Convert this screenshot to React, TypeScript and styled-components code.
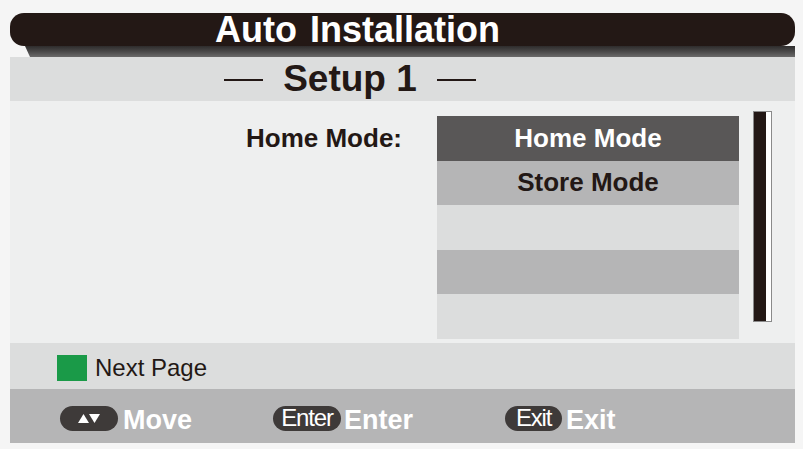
import React from 'react';
import styled, { createGlobalStyle } from 'styled-components';

const GlobalStyle = createGlobalStyle`
  html, body {
    margin: 0;
    padding: 0;
    background: #f5f5f5;
  }
  * {
    box-sizing: border-box;
  }
`;

const Screen = styled.div`
  width: 803px;
  height: 449px;
  padding: 13px 8px 6px 10px;
  display: flex;
  flex-direction: column;
  font-family: 'Liberation Sans', Arial, sans-serif;
  color: #231815;
`;

const TitleBar = styled.div`
  height: 33px;
  background: #231815;
  border-radius: 14px;
  color: #ffffff;
  font-size: 36px;
  font-weight: 700;
  line-height: 33px;
  text-align: center;
  padding-right: 90px;
  white-space: nowrap;
  word-spacing: 3px;
`;

const TitleShadow = styled.div`
  height: 11px;
  margin-left: 15px;
  background: linear-gradient(to bottom, #2e2c2c 0%, #4a4949 50%, #6b6a6a 100%);
  clip-path: polygon(0 0, 100% 0, 100% 100%, 5px 100%);
`;

const SubBand = styled.div`
  height: 44px;
  background: #dcdddd;
  display: flex;
  align-items: center;
  justify-content: center;
  gap: 20px;
  padding-right: 105px;
  font-size: 37px;
  font-weight: 700;
`;

const Dash = styled.span`
  width: 39px;
  height: 2px;
  background: #231815;
  margin-top: 2px;
`;

const Body = styled.div`
  height: 242px;
  background: #eeefef;
  display: flex;
  align-items: flex-start;
  padding-top: 10px;
`;

const Label = styled.div`
  width: 392px;
  margin-top: 5px;
  text-align: right;
  font-size: 26px;
  font-weight: 700;
  line-height: 44px;
  white-space: nowrap;
`;

const List = styled.div`
  width: 302px;
  height: 223px;
  margin: 5px 0 0 35px;
  display: flex;
  flex-direction: column;
`;

const Row = styled.div<{ $tone: 'active' | 'mid' | 'light' }>`
  flex: 1;
  display: flex;
  align-items: center;
  justify-content: center;
  font-size: 26px;
  font-weight: 700;
  background: ${p => (p.$tone === 'active' ? '#595757' : p.$tone === 'mid' ? '#b5b5b6' : '#dcdddd')};
  color: ${p => (p.$tone === 'active' ? '#ffffff' : '#231815')};
`;

const ScrollTrack = styled.div`
  width: 19px;
  height: 211px;
  margin-left: 14px;
  border: 1px solid #8a8a8a;
  background: #ffffff;
  padding-right: 5px;
`;

const ScrollThumb = styled.div`
  height: 100%;
  background: #231815;
`;

const HintBand = styled.div`
  height: 46px;
  background: #dcdddd;
  display: flex;
  align-items: center;
  padding: 4px 0 0 47px;
  gap: 8px;
  font-size: 24px;
`;

const GreenKey = styled.span`
  width: 30px;
  height: 26px;
  background: #1a9a48;
`;

const Footer = styled.div`
  height: 54px;
  background: #b5b5b6;
  display: grid;
  grid-template-columns: 213px 232px auto;
  align-items: center;
  padding: 4px 0 0 50px;
`;

const KeyItem = styled.div`
  display: flex;
  align-items: center;
`;

const Pill = styled.span<{ $w: number }>`
  width: ${p => p.$w}px;
  height: 25px;
  border-radius: 13px;
  background: #3e3a39;
  color: #ffffff;
  display: flex;
  align-items: center;
  justify-content: center;
  font-size: 24px;
  letter-spacing: -1.2px;
  line-height: 1;
  overflow: hidden;
`;

const KeyText = styled.span<{ $gap: number }>`
  margin-left: ${p => p.$gap}px;
  color: #ffffff;
  font-size: 27px;
  font-weight: 700;
  margin-top: 4px;
`;

const ArrowsIcon = () => (
  <svg width="22" height="10" viewBox="0 0 22 10">
    <polygon points="0,10 5.5,1 11,10" fill="#fff" />
    <polygon points="11,1 22,1 16.5,10" fill="#fff" />
  </svg>
);

export default function App() {
  return (
    <>
      <GlobalStyle />
      <Screen>
        <TitleBar>Auto Installation</TitleBar>
        <TitleShadow />
        <SubBand>
          <Dash />
          <span>Setup 1</span>
          <Dash />
        </SubBand>
        <Body>
          <Label>Home Mode:</Label>
          <List>
            <Row $tone="active">Home Mode</Row>
            <Row $tone="mid">Store Mode</Row>
            <Row $tone="light" />
            <Row $tone="mid" />
            <Row $tone="light" />
          </List>
          <ScrollTrack>
            <ScrollThumb />
          </ScrollTrack>
        </Body>
        <HintBand>
          <GreenKey />
          <span>Next Page</span>
        </HintBand>
        <Footer>
          <KeyItem>
            <Pill $w={58}>
              <ArrowsIcon />
            </Pill>
            <KeyText $gap={5}>Move</KeyText>
          </KeyItem>
          <KeyItem>
            <Pill $w={68}>Enter</Pill>
            <KeyText $gap={3}>Enter</KeyText>
          </KeyItem>
          <KeyItem>
            <Pill $w={57}>Exit</Pill>
            <KeyText $gap={4}>Exit</KeyText>
          </KeyItem>
        </Footer>
      </Screen>
    </>
  );
}
